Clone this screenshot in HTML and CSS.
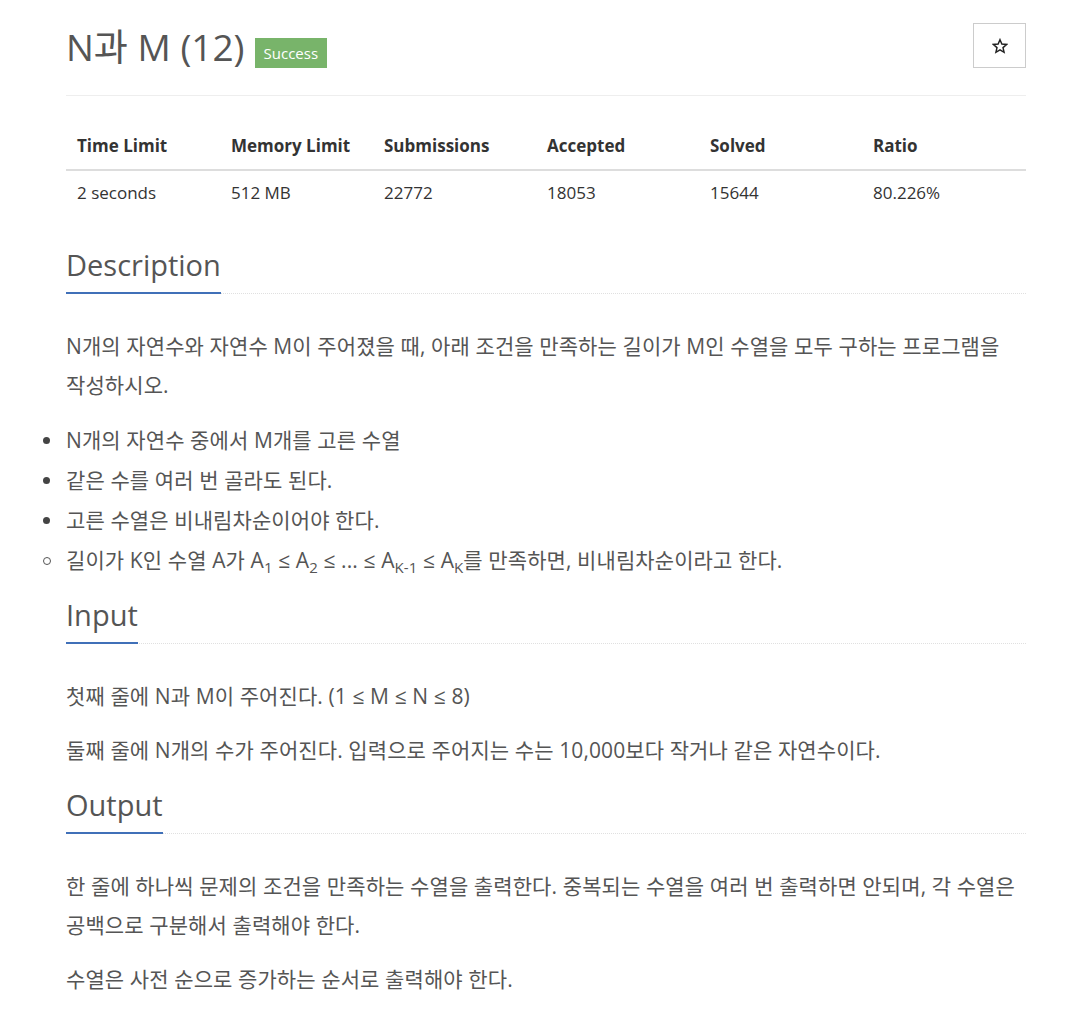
FILE: index.html
```html
<!DOCTYPE html>
<html lang="ko">
<head>
<meta charset="utf-8">
<title>N과 M (12)</title>
<link rel="stylesheet" href="styles.css">
</head>
<body>
<div class="container">
  <div class="page-header">
    <h1 class="title"><span>N과 M (12)</span> <span class="badge">Success</span></h1>
    <button class="star" type="button" aria-label="star">
      <svg width="16" height="16" viewBox="0 0 24 24"><path d="M12 2.5l2.8 6.6 7.1.6-5.4 4.7 1.6 7-6.1-3.7-6.1 3.7 1.6-7-5.4-4.7 7.1-.6z" fill="none" stroke="#222" stroke-width="2.2" stroke-linejoin="miter"/></svg>
    </button>
  </div>

  <table class="info">
    <thead>
      <tr><th>Time Limit</th><th>Memory Limit</th><th>Submissions</th><th>Accepted</th><th>Solved</th><th>Ratio</th></tr>
    </thead>
    <tbody>
      <tr><td>2 seconds</td><td>512 MB</td><td>22772</td><td>18053</td><td>15644</td><td>80.226%</td></tr>
    </tbody>
  </table>

  <section class="section">
    <div class="headline"><h2><span>Description</span></h2></div>
    <div class="text">
      <p>N개의 자연수와 자연수 M이 주어졌을 때, 아래 조건을 만족하는 길이가 M인 수열을 모두 구하는 프로그램을 작성하시오.</p>
      <ul class="list">
        <li>N개의 자연수 중에서 M개를 고른 수열</li>
        <li>같은 수를 여러 번 골라도 된다.</li>
        <li>고른 수열은 비내림차순이어야 한다.</li>
        <li class="sub">길이가 K인 수열 A가 A<sub>1</sub> ≤ A<sub>2</sub> ≤ ... ≤ A<sub>K-1</sub> ≤ A<sub>K</sub>를 만족하면, 비내림차순이라고 한다.</li>
      </ul>
    </div>
  </section>

  <section class="section">
    <div class="headline"><h2><span>Input</span></h2></div>
    <div class="text">
      <p>첫째 줄에 N과 M이 주어진다. (1 ≤ M ≤ N ≤ 8)</p>
      <p>둘째 줄에 N개의 수가 주어진다. 입력으로 주어지는 수는 10,000보다 작거나 같은 자연수이다.</p>
    </div>
  </section>

  <section class="section">
    <div class="headline"><h2><span>Output</span></h2></div>
    <div class="text">
      <p>한 줄에 하나씩 문제의 조건을 만족하는 수열을 출력한다. 중복되는 수열을 여러 번 출력하면 안되며, 각 수열은 공백으로 구분해서 출력해야 한다.</p>
      <p>수열은 사전 순으로 증가하는 순서로 출력해야 한다.</p>
    </div>
  </section>
</div>
</body>
</html>
```

FILE: styles.css
```css
html, body {
  margin: 0;
  padding: 0;
  background: #fff;
}
body {
  font-family: "Open Sans", "Noto Sans CJK KR", sans-serif;
  color: #555;
}
.container {
  width: 960px;
  margin-left: 66px;
}
.page-header {
  display: flex;
  justify-content: space-between;
  align-items: flex-start;
  border-bottom: 1px solid #eee;
  padding-top: 23px;
  height: 96px;
  box-sizing: border-box;
}
.title {
  margin: 0;
  font-size: 37px;
  font-weight: 400;
  line-height: 48px;
  color: #555;
  display: flex;
  align-items: center;
  gap: 10px;
}
.badge {
  display: inline-block;
  background: #78b46a;
  color: #fff;
  font-size: 15px;
  line-height: 30px;
  height: 30px;
  padding: 0 9px;
  margin-top: 12px;
  font-weight: 400;
}
.star {
  width: 53px;
  height: 45px;
  background: #fff;
  border: 1px solid #ccc;
  border-radius: 0;
  padding: 0;
  display: flex;
  align-items: center;
  justify-content: center;
}
.info {
  margin-top: 28px;
  margin-bottom: 30px;
  width: 100%;
  border-collapse: collapse;
  font-size: 17px;
  color: #333;
}
.info th {
  text-align: left;
  font-weight: 700;
  padding: 10px 10px 11px 11px;
  border-bottom: 2px solid #ddd;
  line-height: 24px;
}
.info th:nth-child(1) { width: 133px; }
.info th:nth-child(2) { width: 132px; }
.info th:nth-child(3) { width: 142px; }
.info th:nth-child(4) { width: 142px; }
.info th:nth-child(5) { width: 142px; }
.info td {
  padding: 10px 10px 10px 11px;
  line-height: 24px;
  color: #333;
}
.headline {
  border-bottom: 1px dotted #e0e0e0;
}
.section + .section .headline {
  margin-top: 2px;
}
.headline h2 {
  margin: 0;
  font-size: 29px;
  font-weight: 400;
  line-height: 40px;
  color: #555;
}
.headline h2 span {
  display: inline-block;
  border-bottom: 2px solid #4070b8;
  padding-bottom: 7px;
  margin-bottom: -1px;
}
.text {
  padding-top: 33px;
  font-size: 21px;
  line-height: 39px;
  word-break: keep-all;
  letter-spacing: 0.1px;
}
.text p {
  margin: 0 0 15px;
}
.list {
  margin: 0 0 15px;
  padding: 0;
  list-style: none;
}
.list li {
  position: relative;
  line-height: 40px;
}
.list li::before {
  content: "";
  position: absolute;
  left: -23px;
  top: 17px;
  width: 7px;
  height: 7px;
  border-radius: 50%;
  background: #444;
}
.list li.sub::before {
  background: transparent;
  border: 1px solid #555;
  width: 6px;
  height: 6px;
}
sub {
  font-size: 15px;
  line-height: 0;
  vertical-align: -5px;
}
```
